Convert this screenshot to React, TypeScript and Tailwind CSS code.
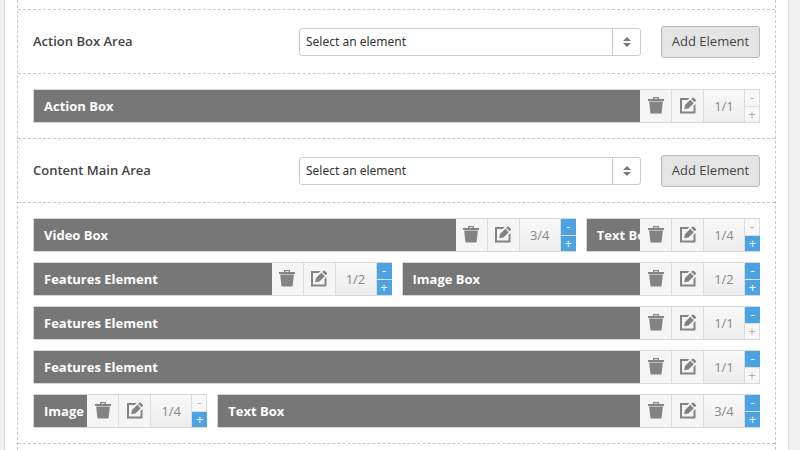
import { useId } from "react";

type Item = { name: string; size: string; canShrink: boolean; canGrow: boolean };
type Area = { title: string; items: Item[] };

const areas: Area[] = [
  {
    title: "Action Box Area",
    items: [{ name: "Action Box", size: "1/1", canShrink: false, canGrow: false }],
  },
  {
    title: "Content Main Area",
    items: [
      { name: "Video Box", size: "3/4", canShrink: true, canGrow: true },
      { name: "Text Box", size: "1/4", canShrink: false, canGrow: true },
      { name: "Features Element", size: "1/2", canShrink: true, canGrow: true },
      { name: "Image Box", size: "1/2", canShrink: true, canGrow: true },
      { name: "Features Element", size: "1/1", canShrink: true, canGrow: false },
      { name: "Features Element", size: "1/1", canShrink: true, canGrow: false },
      { name: "Image Box", size: "1/4", canShrink: false, canGrow: true },
      { name: "Text Box", size: "3/4", canShrink: true, canGrow: true },
    ],
  },
];

const spans: Record<string, string> = {
  "1/4": "col-span-1",
  "1/2": "col-span-2",
  "3/4": "col-span-3",
  "1/1": "col-span-4",
};

function TrashIcon() {
  return (
    <svg viewBox="0 0 16 17" className="h-[17px] w-4" fill="#838383" aria-hidden="true">
      <path d="M5 2V0.500Q5 0 5.500 0h5q.5 0 .5.500V2h5v2H0V2zM6.200 1.200V2h3.600v-.8z" />
      <path d="M1.200 4h13.600v1H1.200z" opacity="0.5" />
      <path d="M1.200 5h13.600l-1.300 11.500H2.500z" />
    </svg>
  );
}

function EditIcon() {
  return (
    <svg viewBox="0 0 16 17" className="h-[17px] w-4" fill="#838383" aria-hidden="true">
      <path d="M0 1h9.500L7.500 3H2v11.500h11.500V9l2-2V16.500H0z" />
      <path d="M4.200 12.300l.8-4.300L10.300 2.700l3.500 3.500-5.300 5.300z" />
      <path d="M11.200 1.900l1.200-1.200q.7-.6 1.300 0l2.100 2.100q.5.600 0 1.300l-1.200 1.200z" />
    </svg>
  );
}

function StepButton({ label, sign, active }: { label: string; sign: string; active: boolean }) {
  return (
    <button
      type="button"
      aria-label={label}
      disabled={!active}
      className={
        active
          ? "flex flex-1 items-center justify-center bg-[#4ba3e3] text-[13px] leading-none text-white"
          : "flex flex-1 items-center justify-center border-r border-[#dcdcdc] bg-[#f7f7f7] text-[13px] leading-none text-[#b0b0b0]"
      }
    >
      {sign}
    </button>
  );
}

function ElementBar({ item }: { item: Item }) {
  return (
    <div
      className={`${spans[item.size]} flex h-[34px] min-w-0 border border-r-0 border-[#d8d8d8] bg-[#777777]`}
    >
      <div className="min-w-0 flex-1 overflow-hidden pl-[10px] text-[13px] leading-8 font-bold whitespace-nowrap text-white">
        {item.name}
      </div>
      <div className="flex shrink-0 bg-linear-to-b from-[#f9f9f9] to-[#ececec]">
        <button
          type="button"
          aria-label={`Delete ${item.name}`}
          className="flex w-8 items-center justify-center border-r border-[#dcdcdc] bg-[#f5f5f5] pb-px"
        >
          <TrashIcon />
        </button>
        <button
          type="button"
          aria-label={`Edit ${item.name}`}
          className="flex w-8 items-center justify-center border-r border-[#dcdcdc] bg-[#f5f5f5] pb-px"
        >
          <EditIcon />
        </button>
        <div className="w-[41px] border-r border-[#dcdcdc] text-center text-[13px] leading-8 text-[#888888]">
          {item.size}
        </div>
        <div className="flex w-[15px] flex-col gap-px bg-[#e0e0e0]">
          <StepButton label={`Shrink ${item.name}`} sign="-" active={item.canShrink} />
          <StepButton label={`Widen ${item.name}`} sign="+" active={item.canGrow} />
        </div>
      </div>
    </div>
  );
}

function AreaSection({ area }: { area: Area }) {
  const id = useId();
  return (
    <section>
      <div className="flex items-center border-b border-dashed border-[#c8c8c8] px-[15px] pt-4 pb-[15px]">
        <label htmlFor={id} className="w-[266px] shrink-0 text-[13px] font-semibold text-[#444444]">
          {area.title}
        </label>
        <div className="relative h-7 flex-1">
          <select
            id={id}
            className="h-7 w-full appearance-none rounded-[3px] border border-[#cccccc] bg-white pl-[6px] font-['Noto_Sans',sans-serif] text-[12px] text-[#333333]"
          >
            <option>Select an element</option>
          </select>
          <span className="pointer-events-none absolute inset-y-px right-px flex w-7 items-center justify-center border-l border-[#cccccc]">
            <svg viewBox="0 0 8 10" className="h-[10px] w-2" fill="#777777" aria-hidden="true">
              <path d="M4 0l4 4H0zM4 10l4-4H0z" />
            </svg>
          </span>
        </div>
        <button
          type="button"
          className="ml-5 h-8 w-[99px] rounded-[3px] border border-[#b8b8b8] bg-[#e4e4e4] text-[13px] text-[#444444]"
        >
          Add Element
        </button>
      </div>
      <div className="grid grid-cols-4 gap-[10px] border-b border-dashed border-[#c8c8c8] p-[15px]">
        {area.items.map((item, index) => (
          <ElementBar key={index} item={item} />
        ))}
      </div>
    </section>
  );
}

export default function App() {
  return (
    <div className="h-screen overflow-hidden bg-[#efefef] pr-[11px] pl-1 font-['Open_Sans',sans-serif]">
      <main className="min-h-full border-x border-[#dcdcdc] bg-white px-3">
        <div className="min-h-screen border-x border-dashed border-[#c8c8c8]">
          <div className="h-[10px] border-b border-dashed border-[#c8c8c8]" />
          {areas.map((area) => (
            <AreaSection key={area.title} area={area} />
          ))}
        </div>
      </main>
    </div>
  );
}
